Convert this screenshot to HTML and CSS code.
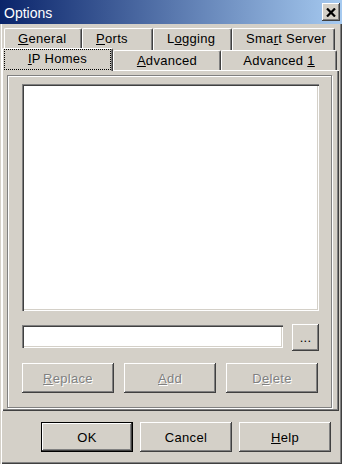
FILE: index.html
```html
<!DOCTYPE html>
<html lang="en">
<head>
  <meta charset="UTF-8" />
  <title>Options</title>
  <link rel="stylesheet" href="styles.css">
</head>
<body>

  <div class="window">
    <div class="titlebar">
      <span class="title">Options</span>
      <span class="close">
        <svg width="10" height="9" viewBox="0 0 10 9"><path d="M1 0.5L9 8.5M9 0.5L1 8.5" stroke="#000" stroke-width="2.2"/></svg>
      </span>
    </div>

    <div class="tabs">
      <div class="tabrow back">
        <div class="tab w-general"><span class="label"><u>G</u>eneral</span></div>
        <div class="tab w-ports"><span class="label"><u>P</u>orts</span></div>
        <div class="tab w-logging"><span class="label">L<u>o</u>gging</span></div>
        <div class="tab w-smart"><span class="label">Sma<u>r</u>t Server</span></div>
      </div>
      <div class="tabrow front">
        <div class="tab selected w-iphomes"><span class="label"><u>I</u>P Homes</span></div>
        <div class="tab w-advanced"><span class="label"><u>A</u>dvanced</span></div>
        <div class="tab w-advanced1"><span class="label">Advanced <u>1</u></span></div>
      </div>
    </div>

    <div class="panel">
      <div class="group">
        <div class="listbox"></div>
        <div class="path-row">
          <div class="field"></div>
          <button class="btn browse">...</button>
        </div>
        <div class="actions">
          <button class="btn disabled"><u>R</u>eplace</button>
          <button class="btn disabled"><u>A</u>dd</button>
          <button class="btn disabled">D<u>e</u>lete</button>
        </div>
      </div>
    </div>

    <div class="footer">
      <button class="btn default">OK</button>
      <button class="btn">Cancel</button>
      <button class="btn"><u>H</u>elp</button>
    </div>
  </div>

</body>
</html>
```

FILE: styles.css
```css
body {
  margin: 0;
  background: #d4d0c8;
  font-family: "Liberation Sans", Arial, sans-serif;
  font-size: 13px;
  letter-spacing: 0.3px;
  color: #000;
}
.window {
  width: 342px;
  height: 464px;
  box-sizing: border-box;
  padding: 0 2px 2px;
  display: flex;
  flex-direction: column;
  background: #d4d0c8;
  box-shadow: inset 1px 0 #d4d0c8, inset 2px 0 #fff, inset -1px -1px #404040, inset -2px -2px #808080;
}
.titlebar {
  height: 24px;
  margin: 0 -2px;
  padding: 0 2px 0 4px;
  display: flex;
  align-items: center;
  justify-content: space-between;
  background: linear-gradient(90deg, #0a246a 0%, #a6caf0 100%);
  color: #fff;
  font-size: 14px;
  letter-spacing: 0;
}
.title {
  padding-top: 2px;
}
.close {
  width: 18px;
  height: 18px;
  box-sizing: border-box;
  display: flex;
  align-items: center;
  justify-content: center;
  background: #d4d0c8;
  box-shadow: inset -1px -1px #404040, inset 1px 1px #fff, inset -2px -2px #808080;
}

/* tab strip */
.tabs {
  margin-top: 4px;
}
.tabrow {
  display: flex;
}
.tabrow.back {
  height: 22px;
  margin-left: 2px;
}
.tabrow.front {
  height: 20px;
  align-items: flex-end;
}
.tab {
  box-sizing: border-box;
  height: 100%;
  border-top: 1px solid #fff;
  border-left: 1px solid #fff;
  border-right: 1px solid #404040;
  border-radius: 2px 2px 0 0;
  box-shadow: inset -1px 0 #808080;
  background: #d4d0c8;
}
.label {
  display: block;
  box-sizing: border-box;
  margin: 0 1px;
  border: 1px dotted transparent;
  padding-top: 1px;
  line-height: 15px;
  white-space: nowrap;
}
.back .label {
  padding-left: 11px;
}
.front .label {
  text-align: center;
}
.tab.selected {
  height: 23px;
  margin-top: -2px;
  margin-bottom: -1px;
  position: relative;
  z-index: 1;
}
.tab.selected .label {
  height: 21px;
  border-color: #000;
}
.w-general { width: 78px; }
.w-ports { width: 71px; }
.w-logging { width: 79px; }
.w-smart { width: 103px; }
.w-iphomes { width: 111px; }
.w-advanced { width: 108px; }
.w-advanced1 { width: 116px; }

/* page */
.panel {
  width: 337px;
  height: 341px;
  box-sizing: border-box;
  padding: 5px 7px 3px 5px;
  box-shadow: inset 1px 1px #fff, inset -1px -1px #404040, inset -2px -2px #808080;
}
.group {
  height: 333px;
  box-sizing: border-box;
  border: 1px solid #808080;
  padding: 8px 0 0 14px;
  box-shadow: inset 1px 1px #fff, 1px 1px #fff;
}
.listbox, .field {
  background: #fff;
  box-shadow: inset 1px 1px #808080, inset 2px 2px #404040, inset -1px -1px #fff, inset -2px -2px #d4d0c8;
}
.listbox {
  width: 297px;
  height: 227px;
}
.path-row {
  display: flex;
  align-items: flex-start;
  height: 27px;
  margin-top: 13px;
}
.field {
  width: 261px;
  height: 23px;
  margin-top: 1px;
}
.actions {
  display: flex;
  gap: 10px;
  margin-top: 12px;
}

/* buttons */
.btn {
  box-sizing: border-box;
  width: 92px;
  height: 30px;
  padding: 0;
  border: 0;
  display: flex;
  align-items: center;
  justify-content: center;
  font: inherit;
  letter-spacing: inherit;
  color: #000;
  background: #d4d0c8;
  box-shadow: inset -1px -1px #404040, inset 1px 1px #fff, inset -2px -2px #808080;
}
.btn.browse {
  width: 27px;
  height: 27px;
  margin-left: 9px;
}
.btn.disabled {
  color: #808080;
  text-shadow: 1px 1px #fff;
}
.btn.default {
  border: 1px solid #000;
}
.footer {
  display: flex;
  gap: 7px;
  margin-top: 11px;
  padding-left: 39px;
}
```
